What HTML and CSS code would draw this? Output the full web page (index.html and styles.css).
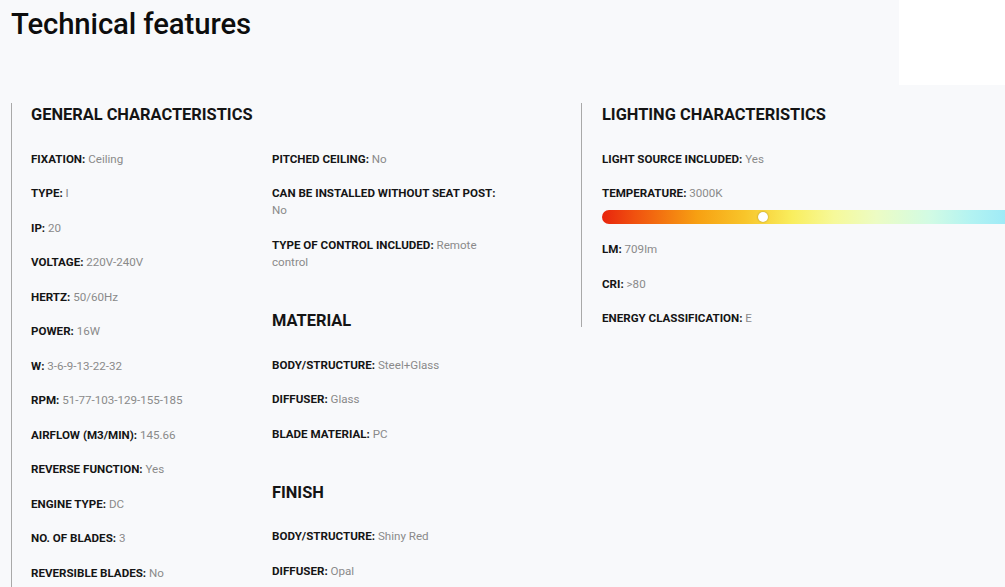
FILE: index.html
```html
<!DOCTYPE html>
<html lang="en">
<head>
<meta charset="utf-8">
<title>Technical features</title>
<link rel="stylesheet" href="styles.css">
</head>
<body>
<div class="page">
  <header class="top">
    <h1 class="title">Technical features</h1>
    <div class="blank"></div>
  </header>
  <div class="sections">
    <section class="section">
      <h2 class="heading">GENERAL CHARACTERISTICS</h2>
      <div class="cols">
        <div class="col">
          <p class="item"><b>FIXATION:</b> Ceiling</p>
          <p class="item"><b>TYPE:</b> I</p>
          <p class="item"><b>IP:</b> 20</p>
          <p class="item"><b>VOLTAGE:</b> 220V-240V</p>
          <p class="item"><b>HERTZ:</b> 50/60Hz</p>
          <p class="item"><b>POWER:</b> 16W</p>
          <p class="item"><b>W:</b> 3-6-9-13-22-32</p>
          <p class="item"><b>RPM:</b> 51-77-103-129-155-185</p>
          <p class="item"><b>AIRFLOW (M3/MIN):</b> 145.66</p>
          <p class="item"><b>REVERSE FUNCTION:</b> Yes</p>
          <p class="item"><b>ENGINE TYPE:</b> DC</p>
          <p class="item"><b>NO. OF BLADES:</b> 3</p>
          <p class="item"><b>REVERSIBLE BLADES:</b> No</p>
        </div>
        <div class="col col-narrow">
          <p class="item"><b>PITCHED CEILING:</b> No</p>
          <p class="item"><b>CAN BE INSTALLED WITHOUT SEAT POST:</b> No</p>
          <p class="item"><b>TYPE OF CONTROL INCLUDED:</b> Remote control</p>
          <h3 class="subheading">MATERIAL</h3>
          <p class="item"><b>BODY/STRUCTURE:</b> Steel+Glass</p>
          <p class="item"><b>DIFFUSER:</b> Glass</p>
          <p class="item"><b>BLADE MATERIAL:</b> PC</p>
          <h3 class="subheading">FINISH</h3>
          <p class="item"><b>BODY/STRUCTURE:</b> Shiny Red</p>
          <p class="item"><b>DIFFUSER:</b> Opal</p>
        </div>
      </div>
    </section>
    <section class="section section-short">
      <h2 class="heading">LIGHTING CHARACTERISTICS</h2>
      <p class="item"><b>LIGHT SOURCE INCLUDED:</b> Yes</p>
      <div class="item">
        <p class="item-text"><b>TEMPERATURE:</b> 3000K</p>
        <div class="temp-bar">
          <span class="knob" style="left: 30.5%"></span>
        </div>
      </div>
      <p class="item"><b>LM:</b> 709lm</p>
      <p class="item"><b>CRI:</b> &gt;80</p>
      <p class="item"><b>ENERGY CLASSIFICATION:</b> E</p>
    </section>
  </div>
</div>
</body>
</html>
```

FILE: styles.css
```css
html, body {
  margin: 0;
  padding: 0;
}

body {
  background: #f8f9fb;
  font-family: Roboto, "Liberation Sans", Arial, sans-serif;
  color: #111;
  overflow: hidden;
  width: 1005px;
  height: 587px;
}

.page {
  padding-left: 11px;
}

.top {
  display: flex;
  justify-content: space-between;
  align-items: flex-start;
  height: 103px;
}

.title {
  margin: 0;
  padding-top: 7px;
  font-size: 29.3px;
  line-height: 34px;
  font-weight: 500;
  color: #0d0d0d;
  letter-spacing: -0.1px;
}

.blank {
  width: 106px;
  height: 85px;
  background: #ffffff;
}

.sections {
  display: grid;
  grid-template-columns: 570px 570px;
  align-items: start;
}

.section {
  border-left: 1px solid #a9a9a9;
  padding-left: 19px;
  min-height: 500px;
}

.section-short {
  min-height: 0;
  padding-left: 20px;
}

.heading {
  margin: 0 0 23.5px;
  font-size: 16.4px;
  line-height: 24px;
  font-weight: 700;
  color: #141414;
}

.cols {
  display: grid;
  grid-template-columns: 241px 232px;
}

.item {
  margin: 0 0 17.1px;
  font-size: 11.6px;
  line-height: 17.4px;
  color: #8a8a8a;
}

.section-short > .item:last-child {
  margin-bottom: 0;
}

.item b {
  color: #151515;
  font-weight: 700;
}

.item-text {
  margin: 0;
}

.subheading {
  margin: 38.5px 0 24.5px;
  font-size: 16.4px;
  line-height: 22px;
  font-weight: 700;
  color: #141414;
}

.temp-bar {
  position: relative;
  margin-top: 7.5px;
  width: 528px;
  height: 14px;
  border-radius: 7px;
  background: linear-gradient(to right,
    #e8240d 0%,
    #f0500f 6%,
    #f7a012 18%,
    #f8c52a 27%,
    #f9ee5e 36%,
    #f6f99a 44%,
    #ecfcc4 52%,
    #d2fbe4 62%,
    #b2f3f2 70%,
    #9ae8f8 78%,
    #86ddf8 100%);
}

.knob {
  position: absolute;
  top: 2px;
  width: 10px;
  height: 10px;
  margin-left: -5px;
  border-radius: 50%;
  background: #fff;
  box-shadow: 0 0 2px rgba(0, 0, 0, 0.35);
}
```
